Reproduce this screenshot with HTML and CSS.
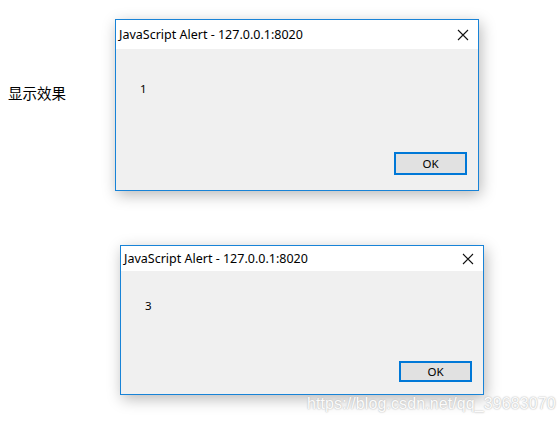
FILE: index.html
```html
<!DOCTYPE html>
<html>
<head>
<meta charset="utf-8">
<link rel="stylesheet" href="styles.css">
</head>
<body>
<div class="page">
  <div class="row first">
    <div class="label">显示效果</div>
    <div class="dialog big">
      <div class="titlebar">
        <span class="title">JavaScript Alert - 127.0.0.1:8020</span>
        <svg class="close" width="12" height="12" viewBox="0 0 12 12"><path d="M1 1L11 11M11 1L1 11" stroke="#111" stroke-width="1.1" fill="none"/></svg>
      </div>
      <div class="content">
        <div class="msg">1</div>
        <div class="actions"><button class="ok">OK</button></div>
      </div>
    </div>
  </div>
  <div class="row second">
    <div class="dialog small">
      <div class="titlebar">
        <span class="title">JavaScript Alert - 127.0.0.1:8020</span>
        <svg class="close" width="12" height="12" viewBox="0 0 12 12"><path d="M1 1L11 11M11 1L1 11" stroke="#111" stroke-width="1.1" fill="none"/></svg>
      </div>
      <div class="content">
        <div class="msg">3</div>
        <div class="actions"><button class="ok">OK</button></div>
      </div>
    </div>
  </div>
  <div class="watermark">https://blog.csdn.net/qq_39683070</div>
</div>
</body>
</html>
```
FILE: styles.css
```css
html, body {
  margin: 0;
  padding: 0;
  background: #ffffff;
}
.page {
  position: relative;
  width: 560px;
  height: 423px;
  overflow: hidden;
  font-family: "Noto Sans", "Open Sans", sans-serif;
}
.row {
  display: flex;
}
.row.first {
  padding-top: 19px;
  padding-left: 8px;
}
.label {
  width: 107px;
  padding-top: 65px;
  font-family: "Noto Sans CJK SC", sans-serif;
  font-size: 14.5px;
  line-height: 18px;
  color: #000;
}
.row.second {
  padding-top: 54px;
  padding-left: 120px;
}
.dialog {
  width: 364px;
  box-sizing: border-box;
  border: 1px solid #1883d7;
  background: #f0f0f0;
  box-shadow: 2px 4px 14px rgba(0, 0, 0, 0.28);
  display: flex;
  flex-direction: column;
}
.dialog.big { height: 172px; }
.dialog.small { height: 150px; }
.titlebar {
  background: #fff;
  display: flex;
  align-items: center;
  justify-content: space-between;
  padding: 0 9px 0 3px;
  color: #000;
}
.big .titlebar { height: 29px; }
.small .titlebar { height: 25px; }
.title {
  font-size: 12.5px;
}
.close { display: block; }
.content {
  flex: 1;
  display: flex;
  flex-direction: column;
  justify-content: space-between;
}
.msg {
  font-size: 11.5px;
  color: #000;
  padding-left: 24px;
}
.big .msg { padding-top: 32px; }
.small .msg { padding-top: 27px; }
.actions {
  display: flex;
  justify-content: flex-end;
  padding-right: 11px;
}
.big .actions { padding-bottom: 15px; }
.small .actions { padding-bottom: 12px; }
.ok {
  width: 73px;
  box-sizing: border-box;
  border: 2px solid #0078d7;
  background: #e1e1e1;
  font-family: "Noto Sans", sans-serif;
  font-size: 11.5px;
  color: #000;
  padding: 0;
  margin: 0;
}
.big .ok { height: 23px; }
.small .ok { height: 21px; }
.watermark {
  position: absolute;
  left: 307px;
  top: 395px;
  font-family: "Liberation Sans", Arial, sans-serif;
  font-size: 16px;
  color: #fbfbfb;
  text-shadow: 0 0 2px #b8b8b8, 0 0 1px #c8c8c8;
  letter-spacing: 0.1px;
}
```
